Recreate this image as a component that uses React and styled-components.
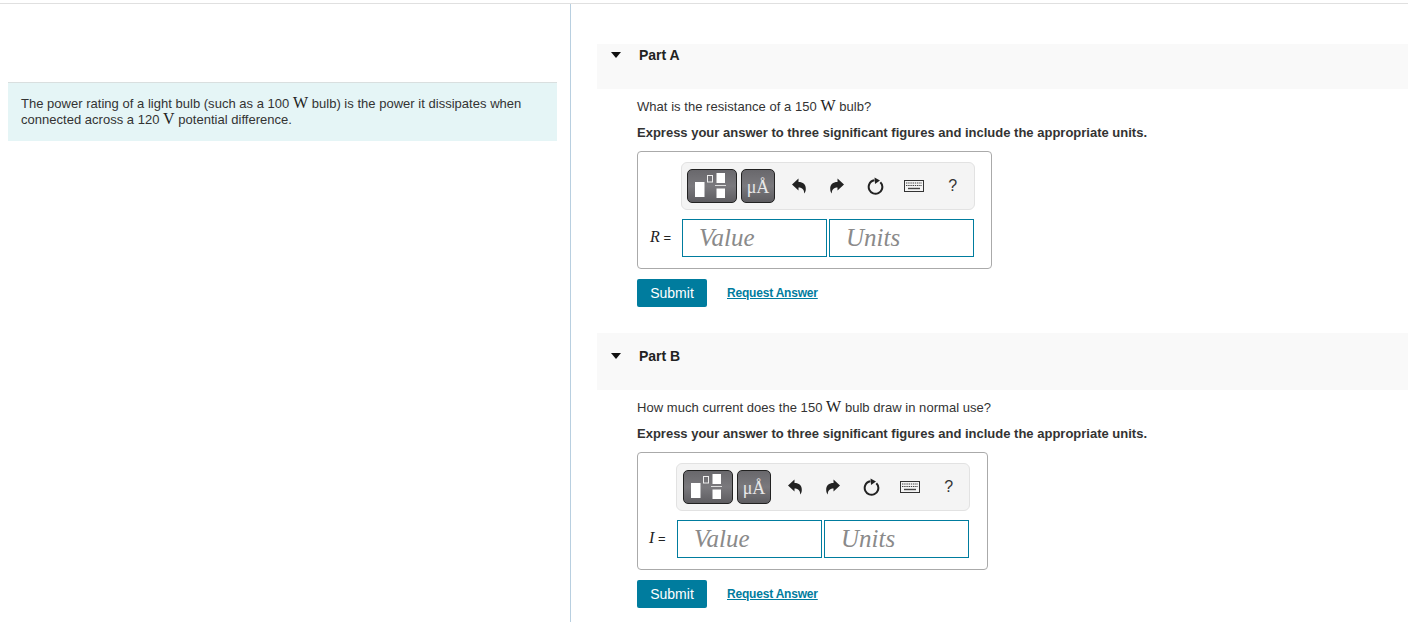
import React from "react";
import styled, { createGlobalStyle } from "styled-components";

const Global = createGlobalStyle`
  html, body { margin: 0; padding: 0; background: #fff; height: 100%; overflow: hidden; }
  body { font-family: "Liberation Sans", Arial, sans-serif; color: #333; }
`;

const Page = styled.div`
  height: 622px;
  overflow: hidden;
  padding-top: 3px;
  box-sizing: border-box;
`;
const TopRule = styled.div`
  height: 1px;
  background: #e0e0e0;
`;
const Columns = styled.div`
  display: flex;
  height: 618px;
`;
const LeftPane = styled.aside`
  width: 570px;
  flex: none;
  box-sizing: border-box;
  padding: 78px 13px 0 8px;
`;
const Divider = styled.div`
  width: 1px;
  flex: none;
  background: #b8cfe0;
`;
const Callout = styled.div`
  height: 59px;
  box-sizing: border-box;
  background: #e5f5f6;
  border-top: 1px solid #d9dfdf;
  padding: 13px 13px 0;
  font-size: 13px;
  line-height: 16px;
  letter-spacing: 0.02px;
  color: #333;
`;
const Unit = styled.span`
  font-family: "Liberation Serif", "Times New Roman", serif;
  font-size: 16px;
  line-height: 0;
  color: #222;
`;
const RightPane = styled.main`
  flex: 1;
  min-width: 0;
  padding: 40px 0 0 26px;
`;
const PartHeader = styled.div`
  height: ${p => p.$h}px;
  background: #f9f9f9;
  display: flex;
  align-items: flex-start;
  padding: ${p => p.$top}px 0 0 14px;
  box-sizing: border-box;
  font-size: 14px;
  font-weight: 700;
  line-height: 16px;
  color: #222;
  margin-top: ${p => p.$mt || 0}px;
`;
const Caret = styled.span`
  width: 0;
  height: 0;
  border-left: 5.5px solid transparent;
  border-right: 5.5px solid transparent;
  border-top: 6px solid #111;
  margin: 5px 18px 0 0;
`;
const Body = styled.section`
  padding: 9px 0 0 40px;
`;
const Question = styled.p`
  margin: 0;
  font-size: 13px;
  line-height: 18px;
  letter-spacing: 0.04px;
`;
const Instruction = styled.p`
  margin: 8px 0 0;
  font-size: 13px;
  font-weight: 700;
  line-height: 18px;
  color: #333;
`;
const AnswerBox = styled.div`
  width: ${p => p.$w}px;
  height: 118px;
  box-sizing: border-box;
  margin-top: 9px;
  border: 1px solid #aaa;
  border-radius: 4px;
  padding-top: 10px;
`;
const Toolbar = styled.div`
  width: 294px;
  height: 48px;
  box-sizing: border-box;
  margin-left: ${p => p.$ml}px;
  background: #f4f4f4;
  border: 1px solid #e2e2e2;
  border-radius: 6px;
  display: flex;
  align-items: center;
  padding-left: ${p => p.$pl}px;
`;
const PaletteButton = styled.div`
  width: ${p => p.$w}px;
  height: 34px;
  box-sizing: border-box;
  margin-right: 4px;
  padding-top: ${p => p.$textNudge || 0}px;
  border: 1px solid #222;
  border-radius: 5px;
  background: linear-gradient(#69686c, #7a797d 50%, #5e5d61);
  display: flex;
  align-items: center;
  justify-content: center;
  color: #e8e8e8;
  font-family: "Liberation Serif", serif;
  font-size: 18px;
`;
const Tools = styled.div`
  display: flex;
  align-items: center;
  margin-left: 1px;
  color: #222;
`;
const ToolCell = styled.div`
  width: ${p => p.$w || 38.5}px;
  display: flex;
  justify-content: center;
  align-items: center;
`;
const Help = styled.span`
  font-size: 16px;
  color: #333;
`;
const InputRow = styled.div`
  display: flex;
  align-items: center;
  margin-top: 9px;
`;
const VarLabel = styled.div`
  width: ${p => p.$w}px;
  flex: none;
  box-sizing: border-box;
  padding: 0 0 2px ${p => p.$pl}px;
  font-size: 13px;
  color: #222;
  white-space: nowrap;
`;
const VarName = styled.i`
  font-family: "Liberation Serif", serif;
  font-size: 16px;
`;
const Field = styled.div`
  width: 145px;
  height: 38px;
  box-sizing: border-box;
  border: 1px solid #007c9e;
  margin-right: 2px;
  padding-left: 16px;
  font-family: "Liberation Serif", serif;
  font-style: italic;
  font-size: 25px;
  line-height: 35px;
  color: #8a8a8a;
`;
const Actions = styled.div`
  display: flex;
  align-items: center;
  margin-top: 10px;
`;
const Submit = styled.button`
  width: 70px;
  height: 28px;
  border: 0;
  border-radius: 2px;
  background: #007c9e;
  color: #fff;
  font: 14px "Liberation Sans", Arial, sans-serif;
  padding: 0;
`;
const RequestLink = styled.a`
  margin-left: 20px;
  font-size: 12px;
  font-weight: 700;
  letter-spacing: -0.2px;
  color: #007c9e;
  text-decoration: underline;
`;
const ArrowSvg = styled.svg`
  transform: ${p => (p.$flip ? "scaleX(-1)" : "none")};
`;

const TemplateIcon = () => (
  <svg width="38" height="30" viewBox="0 0 38 30">
    <rect x="2" y="11" width="9.5" height="15" fill="#fff" />
    <rect x="14.5" y="4.5" width="5" height="6.5" fill="none" stroke="#eee" strokeWidth="1" />
    <rect x="23.5" y="2" width="8.5" height="10" fill="#fff" />
    <rect x="22" y="14" width="11" height="1" fill="#ddd" />
    <rect x="23.5" y="17.5" width="8.5" height="9.5" fill="#fff" />
  </svg>
);
const Undo = ({ flip }) => (
  <ArrowSvg $flip={flip} width="14" height="16" viewBox="0 0 14 16">
    <path d="M0 6.5 L6.5 0.5 V4 C11 4 14 6.5 13.8 11 C13.8 13 13 15 12.2 15.5 C12.3 12 10.5 9.5 6.5 9.5 V12.5 Z" fill="#222" />
  </ArrowSvg>
);
const Reset = () => (
  <svg width="17" height="18" viewBox="0 0 17 18">
    <circle cx="8.5" cy="10" r="6.8" fill="none" stroke="#222" strokeWidth="2" strokeDasharray="36 7" strokeDashoffset="-3" transform="rotate(-70 8.5 10)" />
    <path d="M7.5 0.5 L13 3.6 L8 7 Z" fill="#222" />
  </svg>
);
const Keyboard = () => (
  <svg width="20" height="12" viewBox="0 0 20 12">
    <rect x="0.5" y="0.5" width="19" height="11" fill="#f4f4f4" stroke="#333" />
    <path d="M2 3h16M2 5.5h16" stroke="#444" strokeWidth="1.2" strokeDasharray="1.4 0.8" />
    <path d="M4 8.5h12" stroke="#444" strokeWidth="1.4" />
  </svg>
);

const Part = ({ name, label, mt, h, top, question, box }) => (
  <>
    <PartHeader $mt={mt} $h={h} $top={top}><Caret />{name}</PartHeader>
    <Body>
      <Question>{question}</Question>
      <Instruction>Express your answer to three significant figures and include the appropriate units.</Instruction>
      <AnswerBox $w={box.w}>
        <Toolbar $ml={box.toolbar} $pl={box.toolbarPad}>
          <PaletteButton $w={50}><TemplateIcon /></PaletteButton>
          <PaletteButton $w={34} $textNudge={3}>μÅ</PaletteButton>
          <Tools>
            <ToolCell $w={38}><Undo /></ToolCell>
            <ToolCell><Undo flip /></ToolCell>
            <ToolCell><Reset /></ToolCell>
            <ToolCell><Keyboard /></ToolCell>
            <ToolCell><Help>?</Help></ToolCell>
          </Tools>
        </Toolbar>
        <InputRow>
          <VarLabel $w={box.toolbar + 1} $pl={box.labelX}><VarName>{label}</VarName> =</VarLabel>
          <Field>Value</Field>
          <Field>Units</Field>
        </InputRow>
      </AnswerBox>
      <Actions>
        <Submit>Submit</Submit>
        <RequestLink>Request Answer</RequestLink>
      </Actions>
    </Body>
  </>
);

export default function App() {
  return (
    <Page>
      <Global />
      <TopRule />
      <Columns>
        <LeftPane>
          <Callout>
            The power rating of a light bulb (such as a 100 <Unit>W</Unit> bulb) is the power it dissipates when connected across a 120 <Unit>V</Unit> potential difference.
          </Callout>
        </LeftPane>
        <Divider />
        <RightPane>
          <Part name="Part A" label="R" h={45} top={3} box={{ w: 355, toolbar: 43, toolbarPad: 5, labelX: 12 }}
            question={<>What is the resistance of a 150 <Unit>W</Unit> bulb?</>} />
          <Part name="Part B" label="I" mt={26} h={57} top={15} box={{ w: 351, toolbar: 38, toolbarPad: 6, labelX: 11 }}
            question={<>How much current does the 150 <Unit>W</Unit> bulb draw in normal use?</>} />
        </RightPane>
      </Columns>
    </Page>
  );
}
